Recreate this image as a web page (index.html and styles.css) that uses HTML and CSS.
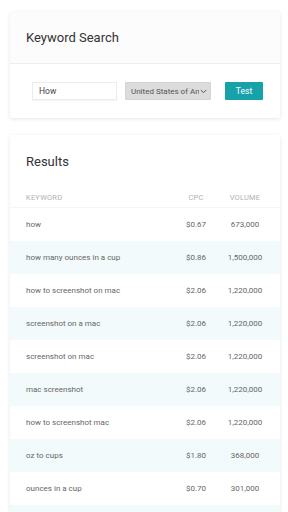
FILE: index.html
```html
<!DOCTYPE html>
<html>
<head>
<meta charset="utf-8">
<link rel="stylesheet" href="styles.css">
</head>
<body>
<div class="page">
  <section class="card">
    <div class="card-head">Keyword Search</div>
    <div class="search-row">
      <div class="input">How</div>
      <div class="select"><span class="select-text">United States of America</span><svg class="chev" width="7" height="5" viewBox="0 0 7 5"><path d="M0.8 1 L3.5 3.7 L6.2 1" fill="none" stroke="#555" stroke-width="1"/></svg></div>
      <div class="btn">Test</div>
    </div>
  </section>
  <section class="card results">
    <div class="card-head plain">Results</div>
    <div class="table">
      <div class="row head"><span class="kw">KEYWORD</span><span class="cpc">CPC</span><span class="vol">VOLUME</span></div>
      <div class="row"><span class="kw">how</span><span class="cpc">$0.67</span><span class="vol">673,000</span></div>
      <div class="row alt"><span class="kw">how many ounces in a cup</span><span class="cpc">$0.86</span><span class="vol">1,500,000</span></div>
      <div class="row"><span class="kw">how to screenshot on mac</span><span class="cpc">$2.06</span><span class="vol">1,220,000</span></div>
      <div class="row alt"><span class="kw">screenshot on a mac</span><span class="cpc">$2.06</span><span class="vol">1,220,000</span></div>
      <div class="row"><span class="kw">screenshot on mac</span><span class="cpc">$2.06</span><span class="vol">1,220,000</span></div>
      <div class="row alt"><span class="kw">mac screenshot</span><span class="cpc">$2.06</span><span class="vol">1,220,000</span></div>
      <div class="row"><span class="kw">how to screenshot mac</span><span class="cpc">$2.06</span><span class="vol">1,220,000</span></div>
      <div class="row alt"><span class="kw">oz to cups</span><span class="cpc">$1.80</span><span class="vol">368,000</span></div>
      <div class="row"><span class="kw">ounces in a cup</span><span class="cpc">$0.70</span><span class="vol">301,000</span></div>
      <div class="row alt"><span class="kw">&nbsp;</span><span class="cpc"></span><span class="vol"></span></div>
    </div>
  </section>
</div>
</body>
</html>
```
FILE: styles.css
```css
html, body {
  margin: 0;
  padding: 0;
  background: #ffffff;
  font-family: Roboto, "Liberation Sans", sans-serif;
  overflow: hidden;
}
.page {
  padding: 12px 8px 0 10px;
  display: flex;
  flex-direction: column;
  gap: 17px;
  height: 512px;
  box-sizing: border-box;
}
.card {
  background: #fff;
  box-shadow: 0 1px 4px rgba(0,0,0,0.10);
  border-radius: 2px;
  flex-shrink: 0;
}
.card-head {
  height: 52px;
  display: flex;
  align-items: center;
  padding-left: 16px;
  font-size: 13px;
  color: #333;
  background: #fcfcfc;
  border-bottom: 1px solid #eeeeee;
  box-sizing: border-box;
}
.card-head.plain {
  border-bottom: none;
  background: #fff;
}
.search-row {
  height: 54px;
  display: flex;
  align-items: center;
  padding-left: 22px;
  box-sizing: border-box;
}
.input {
  width: 85px;
  height: 18px;
  box-sizing: border-box;
  border: 1px solid #ececec;
  box-shadow: 0 1px 1px rgba(0,0,0,0.04);
  font-size: 8.5px;
  color: #444;
  padding-left: 6px;
  display: flex;
  align-items: center;
  background: #fff;
}
.select {
  margin-left: 8px;
  width: 86px;
  height: 18px;
  box-sizing: border-box;
  background: #dcdcdc;
  border: 1px solid #d4d4d4;
  border-radius: 1px;
  display: flex;
  align-items: center;
  padding: 0 3px 0 5px;
  font-size: 8px;
  color: #555;
}
.select-text {
  flex: 1;
  white-space: nowrap;
  overflow: hidden;
}
.chev {
  flex-shrink: 0;
  margin-left: 1px;
}
.btn {
  margin-left: 14px;
  width: 38px;
  height: 18px;
  background: #17a1a9;
  border-radius: 1px;
  color: #fff;
  font-size: 8.5px;
  display: flex;
  align-items: center;
  justify-content: center;
}
.results {
  flex: 1;
}
.table {
  display: flex;
  flex-direction: column;
}
.row {
  display: grid;
  grid-template-columns: 1fr 28px 70px;
  align-items: center;
  height: 33px;
  padding: 0 0 0 16px;
  font-size: 8px;
  color: #666;
}
.row.head {
  height: 20px;
  color: #b0b0b0;
  font-size: 7.5px;
  letter-spacing: 0.2px;
  border-bottom: 1px solid #f5f5f5;
}
.row.alt {
  background: #f3fafb;
}
.cpc, .vol {
  text-align: center;
  white-space: nowrap;
}
```
